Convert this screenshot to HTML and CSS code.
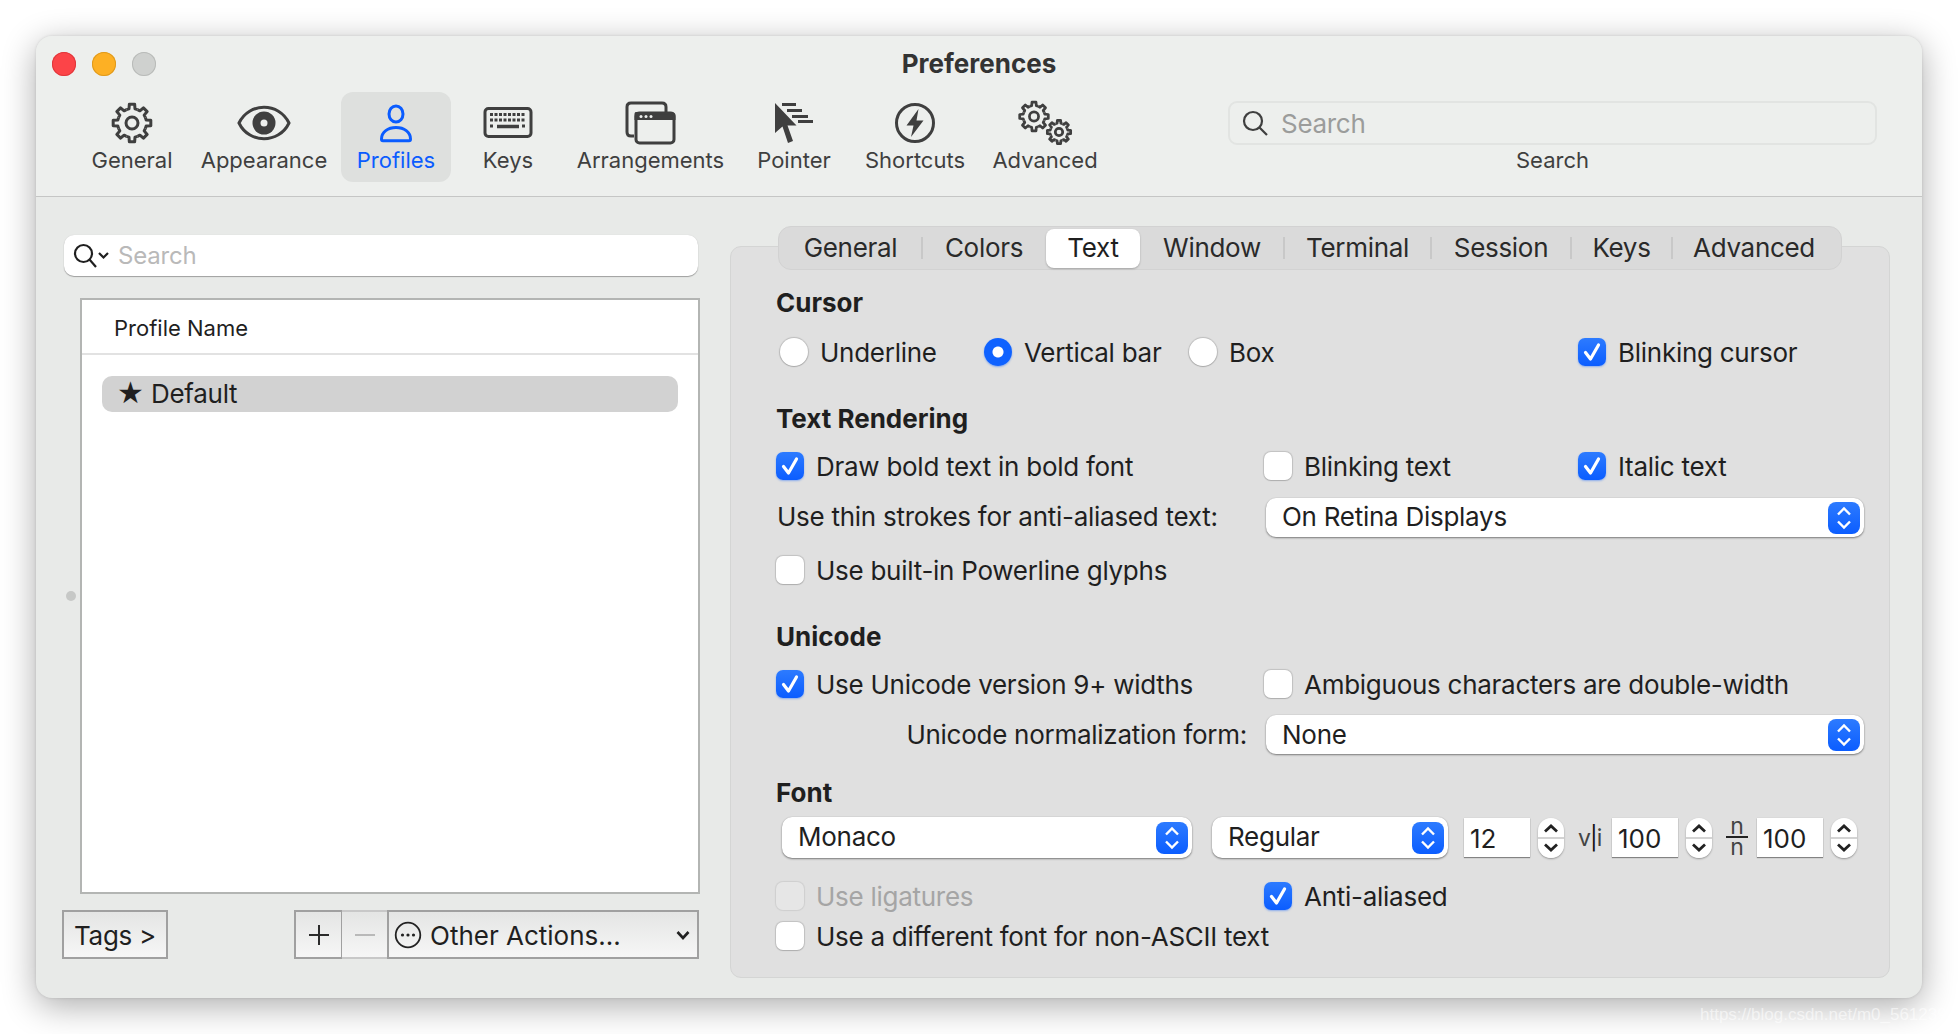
FILE: index.html
```html
<!DOCTYPE html>
<html lang="en">
<head>
<meta charset="utf-8">
<title>Preferences</title>
<link rel="stylesheet" href="styles.css">
</head>
<body>
<svg class="defs" width="0" height="0" aria-hidden="true">
  <defs>
    <g id="cog">
      <path id="tooth" d="M-5.55-13.4L-3.01-14.18L-2.64-18.81L2.64-18.81L3.01-14.18L5.55-13.4"/>
      <use href="#tooth" transform="rotate(45)"/>
      <use href="#tooth" transform="rotate(90)"/>
      <use href="#tooth" transform="rotate(135)"/>
      <use href="#tooth" transform="rotate(180)"/>
      <use href="#tooth" transform="rotate(225)"/>
      <use href="#tooth" transform="rotate(270)"/>
      <use href="#tooth" transform="rotate(315)"/>
      <circle r="6"/>
    </g>
    <g id="updown">
      <path d="M10 12.5L16 6.5L22 12.5M10 19.5L16 25.5L22 19.5"/>
    </g>
    <g id="tick">
      <path d="M7.5 14.5L12.5 21L20.5 7"/>
    </g>
  </defs>
</svg>
<div class="window">
  <header class="head">
    <div class="titlebar">
      <div class="lights"><span class="light red"></span><span class="light orange"></span><span class="light grey"></span></div>
      <div class="title">Preferences</div>
      <div></div>
    </div>
    <nav class="toolbar">
      <div class="tool">
        <svg class="ico" width="46" height="46" viewBox="0 0 46 46"><g class="cogline" transform="translate(23 23)"><use href="#cog"/></g></svg>
        <span>General</span>
      </div>
      <div class="tool">
        <svg class="ico" width="56" height="46" viewBox="0 0 56 46"><path class="line" d="M3 23C13 2 43 2 53 23C43 44 13 44 3 23Z"/><circle class="solid" cx="28" cy="23" r="11.5"/><circle class="hole" cx="28" cy="23" r="3.5"/></svg>
        <span>Appearance</span>
      </div>
      <div class="tool active">
        <svg class="ico" width="36" height="46" viewBox="0 0 36 46"><ellipse class="bline" cx="18" cy="14" rx="7" ry="8"/><path class="bline" d="M3.5 39C3.5 32 10 27.5 18 27.5C26 27.5 32.500 32 32.500 39C32.500 40.200 32 40.800 31 40.800H5C4 40.800 3.500 40.200 3.500 39Z"/></svg>
        <span>Profiles</span>
      </div>
      <div class="tool">
        <svg class="ico" width="50" height="46" viewBox="0 0 50 46">
          <rect class="line" x="2" y="8.500" width="46" height="28" rx="3.500"/>
          <path class="keys" d="M7 14.500H43M7 20H43"/>
          <path class="keys" d="M7 26H11M39 26H43"/>
          <path class="bar" d="M14 26.500H36"/>
        </svg>
        <span>Keys</span>
      </div>
      <div class="tool">
        <svg class="ico" width="52" height="46" viewBox="0 0 52 46">
          <path class="line" d="M9 36H6C3.500 36 2 34.500 2 32V7C2 4.500 3.500 3 6 3H37C39.500 3 41 4.500 41 7V12"/>
          <path class="solid" d="M11 12H47C49 12 50.500 13.500 50.500 15.500V20H9.500V15.500C9.500 13.500 9.500 12 11 12Z"/>
          <rect class="line" x="11" y="13" width="38" height="30" rx="3.500"/>
          <circle class="hole" cx="16" cy="16.500" r="1.500"/><circle class="hole" cx="21" cy="16.500" r="1.500"/><circle class="hole" cx="26" cy="16.500" r="1.500"/>
        </svg>
        <span>Arrangements</span>
      </div>
      <div class="tool">
        <svg class="ico" width="40" height="46" viewBox="0 0 40 46">
          <path class="solid" d="M1 3V33L8.500 26.500L14 43L19 41L13.500 25.500H22.500Z"/>
          <path class="speed" d="M8 4.500H22M13 10.500H28M18 16.500H34M24 21.500H39"/>
        </svg>
        <span>Pointer</span>
      </div>
      <div class="tool">
        <svg class="ico" width="42" height="46" viewBox="0 0 42 46">
          <circle class="line" cx="21" cy="23" r="18.500"/>
          <path class="solid" d="M24.500 9L12.500 25.500H19.500L17 37L29.500 20.500H22.500Z"/>
        </svg>
        <span>Shortcuts</span>
      </div>
      <div class="tool">
        <svg class="ico" width="56" height="46" viewBox="0 0 56 46">
          <g class="cogline small" transform="translate(17 16.500) scale(.76)"><use href="#cog"/></g>
          <g class="cogline tiny" transform="translate(42 32) scale(.62)"><use href="#cog"/></g>
        </svg>
        <span>Advanced</span>
      </div>
      <div class="tool-search">
        <div class="top-search">
          <svg width="28" height="28" viewBox="0 0 28 28"><circle class="glass" cx="12" cy="12" r="9"/><path class="glass" d="M18.500 18.500L26 26"/></svg>
          <span>Search</span>
        </div>
        <span class="tool-search-label">Search</span>
      </div>
    </nav>
  </header>

  <main class="content">
    <section class="left">
      <div class="profile-search">
        <svg class="lens" width="38" height="26" viewBox="0 0 38 26"><circle class="glass dark" cx="10.500" cy="10.500" r="8.500"/><path class="glass dark" d="M16.500 16.500L23 24"/><path class="glass dark" d="M26 10L30.500 14.500L35 10"/></svg>
        <span>Search</span>
      </div>
      <div class="list-wrap">
        <span class="grip"></span>
        <div class="table">
          <div class="thead">Profile Name</div>
          <div class="trow"><span class="star">★</span><span>Default</span></div>
        </div>
      </div>
      <div class="actions">
        <div class="btn tags">Tags &gt;</div>
        <div class="group">
          <div class="btn plus"><svg width="24" height="24" viewBox="0 0 24 24"><path class="sign" d="M12 2V22M2 12H22"/></svg></div>
          <div class="btn minus"><svg width="24" height="24" viewBox="0 0 24 24"><path class="sign off" d="M2 12H22"/></svg></div>
          <div class="btn other">
            <svg width="28" height="28" viewBox="0 0 28 28"><circle class="thin" cx="14" cy="14" r="12.300"/><circle class="dot" cx="8.500" cy="14" r="1.600"/><circle class="dot" cx="14" cy="14" r="1.600"/><circle class="dot" cx="19.500" cy="14" r="1.600"/></svg>
            <span class="other-text">Other Actions...</span>
            <svg width="14" height="10" viewBox="0 0 14 10"><path class="caret" d="M1.500 2L7 8L12.500 2"/></svg>
          </div>
        </div>
      </div>
    </section>

    <section class="right">
      <div class="panel">
        <div class="tabs">
          <span class="tab t1">General</span><i class="sep"></i>
          <span class="tab t2">Colors</span>
          <span class="tab t3 on">Text</span>
          <span class="tab t4">Window</span><i class="sep"></i>
          <span class="tab t5">Terminal</span><i class="sep"></i>
          <span class="tab t6">Session</span><i class="sep"></i>
          <span class="tab t7">Keys</span><i class="sep"></i>
          <span class="tab t8">Advanced</span>
        </div>

        <h2 class="h h-cursor">Cursor</h2>
        <div class="row cursor-row">
          <label class="opt"><span class="radio"></span>Underline</label>
          <label class="opt"><span class="radio sel"></span>Vertical bar</label>
          <label class="opt"><span class="radio"></span>Box</label>
          <label class="opt"><span class="check on"><svg width="28" height="28" viewBox="0 0 28 28"><use class="tickline" href="#tick"/></svg></span>Blinking cursor</label>
        </div>

        <h2 class="h h-next">Text Rendering</h2>
        <div class="row cols first">
          <label class="opt"><span class="check on"><svg width="28" height="28" viewBox="0 0 28 28"><use class="tickline" href="#tick"/></svg></span>Draw bold text in bold font</label>
          <label class="opt"><span class="check"></span>Blinking text</label>
          <label class="opt"><span class="check on"><svg width="28" height="28" viewBox="0 0 28 28"><use class="tickline" href="#tick"/></svg></span>Italic text</label>
        </div>
        <div class="row pop-row thin-row">
          <span class="pop-label">Use thin strokes for anti-aliased text:</span>
          <div class="popup wide"><span class="pop-text">On Retina Displays</span><span class="blue"><svg width="32" height="32" viewBox="0 0 32 32"><use class="ud" href="#updown"/></svg></span></div>
        </div>
        <div class="row builtin">
          <label class="opt"><span class="check"></span>Use built-in Powerline glyphs</label>
        </div>

        <h2 class="h h-next">Unicode</h2>
        <div class="row cols first">
          <label class="opt"><span class="check on"><svg width="28" height="28" viewBox="0 0 28 28"><use class="tickline" href="#tick"/></svg></span>Use Unicode version 9+ widths</label>
          <label class="opt span2"><span class="check"></span>Ambiguous characters are double-width</label>
        </div>
        <div class="row pop-row norm-row">
          <span class="pop-label end">Unicode normalization form:</span>
          <div class="popup wide"><span class="pop-text">None</span><span class="blue"><svg width="32" height="32" viewBox="0 0 32 32"><use class="ud" href="#updown"/></svg></span></div>
        </div>

        <h2 class="h h-font">Font</h2>
        <div class="row font-row">
          <div class="popup face"><span class="pop-text">Monaco</span><span class="blue"><svg width="32" height="32" viewBox="0 0 32 32"><use class="ud" href="#updown"/></svg></span></div>
          <div class="popup weight"><span class="pop-text">Regular</span><span class="blue"><svg width="32" height="32" viewBox="0 0 32 32"><use class="ud" href="#updown"/></svg></span></div>
          <div class="field">12</div>
          <div class="stepper"><svg width="26" height="40" viewBox="0 0 26 40"><path class="step" d="M7 13.500L13 8L19 13.500M7 26.500L13 32L19 26.500"/></svg></div>
          <span class="vi">v<b>|</b>i</span>
          <div class="field">100</div>
          <div class="stepper"><svg width="26" height="40" viewBox="0 0 26 40"><path class="step" d="M7 13.500L13 8L19 13.500M7 26.500L13 32L19 26.500"/></svg></div>
          <span class="frac"><span class="num">n</span><span class="den">n</span></span>
          <div class="field">100</div>
          <div class="stepper"><svg width="26" height="40" viewBox="0 0 26 40"><path class="step" d="M7 13.500L13 8L19 13.500M7 26.500L13 32L19 26.500"/></svg></div>
        </div>
        <div class="row cols lig">
          <label class="opt disabled"><span class="check"></span>Use ligatures</label>
          <label class="opt span2"><span class="check on"><svg width="28" height="28" viewBox="0 0 28 28"><use class="tickline" href="#tick"/></svg></span>Anti-aliased</label>
        </div>
        <div class="row ascii">
          <label class="opt"><span class="check"></span>Use a different font for non-ASCII text</label>
        </div>
      </div>
    </section>
  </main>
</div>
<div class="watermark">https://blog.csdn.net/m0_5612399</div>
</body>
</html>
```

FILE: styles.css
```css
* { box-sizing: border-box; }
html, body { margin: 0; height: 100%; background: #fff; }
body {
  width: 1958px;
  height: 1034px;
  padding: 36px 0 0 36px;
  overflow: hidden;
  position: relative;
  font-family: Inter, "Liberation Sans", sans-serif;
  color: #1f1f1f;
}
.defs { display: block; height: 0; }

.window {
  width: 1886px;
  height: 962px;
  border-radius: 16px;
  background: #e8eae8;
  box-shadow: 0 8px 34px rgba(0, 0, 0, .33), 0 0 3px rgba(0, 0, 0, .12);
  display: flex;
  flex-direction: column;
}

.head {
  height: 161px;
  flex: none;
  background: #edefed;
  border-bottom: 1px solid #c5c6c5;
  border-radius: 16px 16px 0 0;
}
.titlebar {
  height: 56px;
  display: grid;
  grid-template-columns: 1fr auto 1fr;
  align-items: center;
}
.lights { display: flex; gap: 16px; padding: 0 0 0 16px; }
.light { width: 24px; height: 24px; border-radius: 50%; }
.red { background: #fc4448; box-shadow: inset 0 0 0 1px #e0383c; }
.orange { background: #fdb024; box-shadow: inset 0 0 0 1px #df9a1e; }
.grey { background: #cfd1cf; box-shadow: inset 0 0 0 1px #b9bbb9; }
.title { font-size: 26px; font-weight: 700; color: #333; padding-bottom: 2px; }

.toolbar {
  display: grid;
  grid-template-columns: 110px 154px 110px 114px 171px 116px 126px 134px 1fr;
  padding-left: 41px;
  height: 90px;
}
.tool {
  display: flex;
  flex-direction: column;
  align-items: center;
  padding-top: 8px;
  font-size: 22px;
  line-height: 28px;
  color: #3f3f3f;
  border-radius: 12px;
  white-space: nowrap;
}
.tool.active { background: #dee0de; color: #0a5cff; }
.ico { flex: none; }
.line { fill: none; stroke: #3f3f3f; stroke-width: 3; }
.solid { fill: #3f3f3f; }
.hole { fill: #edefed; }
.bline { fill: none; stroke: #0a5cff; stroke-width: 3; }
.cogline { fill: none; stroke: #3f3f3f; stroke-width: 3; stroke-linejoin: round; }
.cogline.small { stroke-width: 3.6; }
.cogline.tiny { stroke-width: 4.4; }
.keys { fill: none; stroke: #3f3f3f; stroke-width: 3; stroke-dasharray: 3 1.500; }
.bar { fill: none; stroke: #3f3f3f; stroke-width: 3.500; }
.speed { fill: none; stroke: #3f3f3f; stroke-width: 3; }

.tool-search {
  margin-left: 116px;
  width: 649px;
  padding-top: 9px;
  display: flex;
  flex-direction: column;
  align-items: center;
}
.top-search {
  width: 100%;
  height: 44px;
  flex: none;
  display: flex;
  align-items: center;
  gap: 12px;
  padding-left: 11px;
  border: 2px solid #e2e4e2;
  border-radius: 9px;
  font-size: 26px;
  letter-spacing: -.3px;
  color: #9b9c9b;
}
.top-search span { padding-top: 1px; }
.tool-search-label { font-size: 22px; line-height: 28px; margin-top: 1px; color: #3f3f3f; }
.glass { fill: none; stroke: #3f3f3f; stroke-width: 2.200; }
.glass.dark { stroke: #1f1f1f; }

.content {
  flex: 1;
  min-height: 0;
  display: grid;
  grid-template-columns: 637px 1160px;
  column-gap: 31px;
  padding-left: 26px;
}

.left {
  padding: 38px 0 39px;
  display: flex;
  flex-direction: column;
}
.profile-search {
  height: 41px;
  flex: none;
  margin: 0 1px 0 2px;
  background: #fff;
  border-radius: 10px;
  box-shadow: 0 1px 1px #9e9f9e, 0 0 1px #c9c9c9;
  display: flex;
  align-items: center;
  gap: 7px;
  padding-left: 9px;
  font-size: 24px;
  letter-spacing: -.2px;
  color: #b9b9b9;
}
.lens { flex: none; }
.list-wrap {
  flex: 1;
  min-height: 0;
  margin-top: 22px;
  display: flex;
  align-items: center;
}
.grip { width: 10px; height: 10px; border-radius: 50%; background: #c6c8c6; margin: 0 4px 0 4px; flex: none; }
.table {
  flex: 1;
  height: 100%;
  margin-right: -1px;
  background: #fff;
  border: 2px solid #b3b5b3;
}
.thead {
  height: 55px;
  border-bottom: 2px solid #e2e2e2;
  padding-left: 32px;
  font-size: 22px;
  line-height: 56px;
}
.trow {
  margin: 21px 20px 0 20px;
  height: 36px;
  background: #d2d2d2;
  border-radius: 10px;
  display: flex;
  align-items: center;
  gap: 7px;
  padding: 0 0 2px 15px;
  font-size: 26px;
  letter-spacing: -.27px;
}
.star { font-size: 30px; font-family: "DejaVu Sans", sans-serif; letter-spacing: 0; line-height: 1; }

.actions {
  height: 49px;
  flex: none;
  margin-top: 16px;
  display: flex;
  justify-content: space-between;
}
.group { display: flex; }
.btn {
  height: 49px;
  border: 2px solid #a0a0a0;
  background: linear-gradient(#e4e5e4, #f6f6f6);
  display: flex;
  align-items: center;
  justify-content: center;
  font-size: 26px;
}
.tags { width: 106px; letter-spacing: -.25px; padding-top: 1px; }
.plus { width: 48px; border-right-width: 1px; }
.minus { width: 45px; border-width: 2px 0; border-color: #c8c8c8; }
.other {
  width: 312px;
  justify-content: flex-start;
  padding: 0 7px 0 5px;
}
.other-text { margin-left: 8px; flex: 1; padding-top: 1px; }
.sign { fill: none; stroke: #2b2b2b; stroke-width: 2; }
.sign.off { stroke: #b9b9b9; }
.thin { fill: none; stroke: #222; stroke-width: 1.800; }
.dot { fill: #222; }
.caret { fill: none; stroke: #222; stroke-width: 2.600; }

.right { padding: 49px 0 20px; display: flex; }
.panel {
  flex: 1;
  height: 732px;
  background: #e0e0e0;
  border: 1px solid #d4d5d4;
  border-radius: 11px;
  padding-left: 45px;
}
.tabs {
  width: 1064px;
  height: 44px;
  margin: -21px 0 0 2px;
  background: #dadada;
  border: 1px solid #d2d2d2;
  border-radius: 13px;
  display: flex;
  align-items: center;
  font-size: 26px;
  letter-spacing: -.3px;
  color: #2a2a2a;
}
.tab { display: flex; align-items: center; justify-content: center; height: 39px; flex: none; padding-bottom: 2px; }
.t1 { width: 143px; }
.t2 { width: 124px; }
.t3 { width: 94px; background: #fff; border-radius: 8px; box-shadow: 0 1px 2px rgba(0, 0, 0, .25); color: #1f1f1f; }
.t4 { width: 144px; }
.t5 { width: 147px; }
.t6 { width: 140px; }
.t7 { width: 101px; }
.t8 { width: 164px; }
.sep { width: 2px; height: 22px; background: #c8c8c8; flex: none; margin: 0 -1px; }

.h { margin: 0; font-size: 26px; font-weight: 700; line-height: 30px; color: #1f1f1f; }
.h-cursor { margin-top: 18px; }
.h-next { margin-top: 38px; }
.h-font { margin-top: 24px; }

.row { font-size: 26px; letter-spacing: -.27px; }
.opt { display: flex; align-items: center; gap: 12px; height: 28px; white-space: nowrap; }
.cursor-row { display: grid; grid-template-columns: 204px 205px 389px 1fr; padding-left: 4px; margin-top: 20px; }
.cols { display: grid; grid-template-columns: 488px 314px 1fr; }
.first { margin-top: 18px; }
.span2 { grid-column: 2 / 4; }
.pop-row { display: grid; grid-template-columns: 490px 598px; align-items: center; }
.thin-row { margin-top: 18px; }
.thin-row .pop-label, .thin-row .pop-text { padding-bottom: 3px; }
.norm-row { margin-top: 17px; }
.builtin { margin-top: 19px; }
.pop-label { padding-left: 1px; white-space: nowrap; }
.pop-label.end { justify-self: end; padding-right: 19px; }
.lig { margin-top: 24px; }
.ascii { margin-top: 12px; }

.radio {
  width: 28px;
  height: 28px;
  flex: none;
  border-radius: 50%;
  background: #fff;
  box-shadow: 0 0 1px 1px rgba(0, 0, 0, .16), 0 1px 1px rgba(0, 0, 0, .12);
}
.radio.sel {
  background: radial-gradient(circle, #fff 0 5px, #0f62ff 6px);
  box-shadow: 0 1px 2px rgba(15, 98, 255, .45);
}
.check {
  width: 28px;
  height: 28px;
  flex: none;
  border-radius: 7px;
  background: #fff;
  box-shadow: 0 0 1px 1px rgba(0, 0, 0, .14), 0 1px 1px rgba(0, 0, 0, .1);
}
.check svg { display: block; }
.check.on {
  background: linear-gradient(#2d7bff, #0b5dff);
  box-shadow: 0 1px 2px rgba(15, 98, 255, .4);
}
.tickline { fill: none; stroke: #fff; stroke-width: 3.200; stroke-linecap: round; stroke-linejoin: round; }
.disabled { color: #a5a5a5; }
.disabled .check { background: #e6e6e6; box-shadow: 0 0 1px 1px rgba(0, 0, 0, .08); }

.popup {
  height: 39px;
  background: #fff;
  border-radius: 10px;
  box-shadow: 0 1px 2px rgba(0, 0, 0, .45), 0 0 1px rgba(0, 0, 0, .2);
  display: flex;
  align-items: center;
  justify-content: space-between;
  padding: 0 4px 0 16px;
  flex: none;
}
.wide { width: 598px; }
.blue {
  width: 32px;
  height: 32px;
  border-radius: 8px;
  background: linear-gradient(#2d7bff, #0b5dff);
  flex: none;
}
.blue svg { display: block; }
.ud { fill: none; stroke: #fff; stroke-width: 2.400; }

.font-row { display: flex; align-items: center; height: 41px; margin-top: 9px; padding-left: 6px; }
.font-row .pop-text { padding-bottom: 2px; }
.face { width: 410px; height: 41px; }
.weight { width: 236px; height: 41px; margin-left: 20px; margin-right: 16px; }
.field {
  width: 66px;
  height: 39px;
  flex: none;
  background: #fff;
  box-shadow: 0 1px 1px rgba(0, 0, 0, .4), 0 0 1px rgba(0, 0, 0, .15);
  font-size: 26px;
  letter-spacing: 0;
  line-height: 41px;
  padding-left: 6px;
}
.stepper {
  width: 26px;
  height: 40px;
  flex: none;
  margin-left: 8px;
  background: linear-gradient(#fff 0 19px, #d3d3d3 19px 21px, #fff 21px);
  border-radius: 13px;
  box-shadow: 0 1px 2px rgba(0, 0, 0, .35);
}
.stepper svg { display: block; }
.step { fill: none; stroke: #222; stroke-width: 2.800; }
.vi { width: 48px; padding-left: 14px; font-size: 23px; color: #444; letter-spacing: -1px; flex: none; }
.vi b { font-weight: 400; color: #111; }
.frac {
  width: 45px;
  flex: none;
  padding: 0 9px 0 14px;
  display: flex;
  flex-direction: column;
  align-items: stretch;
  font-size: 23px;
  color: #444;
  text-align: center;
}
.num, .den { height: 19px; }
.num { height: 20px; line-height: 16px; border-bottom: 2px solid #222; }
.den { line-height: 19px; }

.watermark {
  position: absolute;
  left: 1700px;
  top: 1005px;
  font-family: "Liberation Sans", sans-serif;
  font-size: 17px;
  line-height: 20px;
  color: rgba(255, 255, 255, .58);
  white-space: nowrap;
}
```
